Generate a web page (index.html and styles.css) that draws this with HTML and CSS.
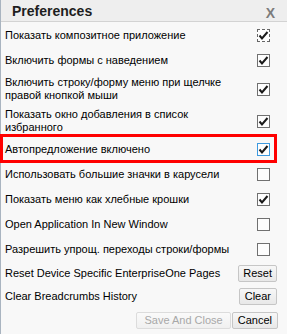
FILE: index.html
```html
<!DOCTYPE html>
<html lang="ru">
<head>
<meta charset="utf-8">
<title>Preferences</title>
<link rel="stylesheet" href="styles.css">
</head>
<body>
<div class="dialog">
  <div class="header">
    <span class="title">Preferences</span>
    <span class="close">X</span>
  </div>
  <div class="rows">
    <div class="row">
      <span class="label">Показать композитное приложение</span>
      <span class="cb cb-focus"><svg viewBox="0 0 11 11" width="11" height="11"><path d="M1.5 5.5 L4 8.5 L9.5 2" fill="none" stroke="#1a1a1a" stroke-width="2"/></svg></span>
    </div>
    <div class="row">
      <span class="label">Включить формы с наведением</span>
      <span class="cb"><svg viewBox="0 0 11 11" width="11" height="11"><path d="M1.5 5.5 L4 8.5 L9.5 2" fill="none" stroke="#1a1a1a" stroke-width="2"/></svg></span>
    </div>
    <div class="row">
      <span class="label">Включить строку/форму меню при щелчке правой кнопкой мыши</span>
      <span class="cb"><svg viewBox="0 0 11 11" width="11" height="11"><path d="M1.5 5.5 L4 8.5 L9.5 2" fill="none" stroke="#1a1a1a" stroke-width="2"/></svg></span>
    </div>
    <div class="row">
      <span class="label">Показать окно добавления в список избранного</span>
      <span class="cb"><svg viewBox="0 0 11 11" width="11" height="11"><path d="M1.5 5.5 L4 8.5 L9.5 2" fill="none" stroke="#1a1a1a" stroke-width="2"/></svg></span>
    </div>
    <div class="row highlight">
      <span class="label">Автопредложение включено</span>
      <span class="cb cb-hover"><svg viewBox="0 0 11 11" width="11" height="11"><path d="M1.5 5.5 L4 8.5 L9.5 2" fill="none" stroke="#1a1a1a" stroke-width="2"/></svg></span>
    </div>
    <div class="row">
      <span class="label">Использовать большие значки в карусели</span>
      <span class="cb"></span>
    </div>
    <div class="row">
      <span class="label">Показать меню как хлебные крошки</span>
      <span class="cb"><svg viewBox="0 0 11 11" width="11" height="11"><path d="M1.5 5.5 L4 8.5 L9.5 2" fill="none" stroke="#1a1a1a" stroke-width="2"/></svg></span>
    </div>
    <div class="row">
      <span class="label">Open Application In New Window</span>
      <span class="cb"></span>
    </div>
    <div class="row">
      <span class="label">Разрешить упрощ. переходы строки/формы</span>
      <span class="cb"></span>
    </div>
    <div class="row btn-row">
      <span class="label">Reset Device Specific EnterpriseOne Pages</span>
      <button class="btn btn-reset">Reset</button>
    </div>
    <div class="row btn-row">
      <span class="label">Clear Breadcrumbs History</span>
      <button class="btn btn-clear">Clear</button>
    </div>
  </div>
  <div class="footer">
    <button class="btn btn-save" disabled>Save And Close</button>
    <button class="btn btn-cancel">Cancel</button>
  </div>
</div>
</body>
</html>
```
FILE: styles.css
```css
html, body {
  margin: 0;
  padding: 0;
}
body {
  font-family: "Liberation Sans", Arial, sans-serif;
  font-size: 11px;
  color: #000;
  background: #f8f8f8;
}
.dialog {
  width: 287px;
  height: 334px;
  box-sizing: border-box;
  border-left: 1px solid #a9b4c0;
  background: #f8f8f8;
  display: flex;
  flex-direction: column;
}
.header {
  height: 21px;
  border-bottom: 1px solid #d3d3d3;
  background: #eeeeee;
  display: flex;
  align-items: center;
  justify-content: space-between;
  padding: 0 12px 0 11px;
}
.title {
  font-weight: bold;
  font-size: 14px;
  color: #1e1e1e;
}
.close {
  font-weight: bold;
  font-size: 14px;
  color: #7c7c7c;
  margin-top: 4px;
}
.rows {
  padding-top: 1px;
  display: flex;
  flex-direction: column;
}
.row {
  display: flex;
  align-items: center;
  justify-content: space-between;
  box-sizing: border-box;
  min-height: 25px;
  padding: 3px 10px 3px 4px;
  line-height: 13px;
}
.label {
  max-width: 236px;
}
.cb {
  width: 13px;
  height: 13px;
  box-sizing: border-box;
  border: 1px solid #707070;
  background: #fdfdfd;
  margin-right: 7px;
  display: flex;
  flex-shrink: 0;
}
.cb svg {
  display: block;
}
.cb-focus {
  border: 1px dashed #666;
}
.cb-hover {
  border-color: #3d9ae0;
}
.highlight {
  position: relative;
}
.highlight::after {
  content: "";
  position: absolute;
  left: -1px;
  top: -3px;
  width: 277px;
  height: 29px;
  box-sizing: border-box;
  border: 3px solid #f00;
  pointer-events: none;
}
.btn-row {
  min-height: 23px;
  padding-top: 2px;
  padding-bottom: 2px;
}
.btn {
  font-family: "Liberation Sans", Arial, sans-serif;
  font-size: 11px;
  height: 17px;
  line-height: 15px;
  padding: 0 5px;
  margin: 0;
  border: 1px solid #c6c6c6;
  border-radius: 2px;
  background: linear-gradient(#f7f7f7, #e8e8e8);
  color: #000;
}
.btn-reset {
  padding: 0 4px;
}
.btn-clear {
  padding: 0 5px;
}
.btn-save {
  padding: 0 7px;
  color: #a8a8a8;
  border-color: #dcdcdc;
  background: linear-gradient(#fafafa, #f0f0f0);
}
.btn-cancel {
  margin-left: 1px;
}
.footer {
  display: flex;
  justify-content: flex-end;
  align-items: center;
  height: 24px;
  padding-right: 9px;
}
```
